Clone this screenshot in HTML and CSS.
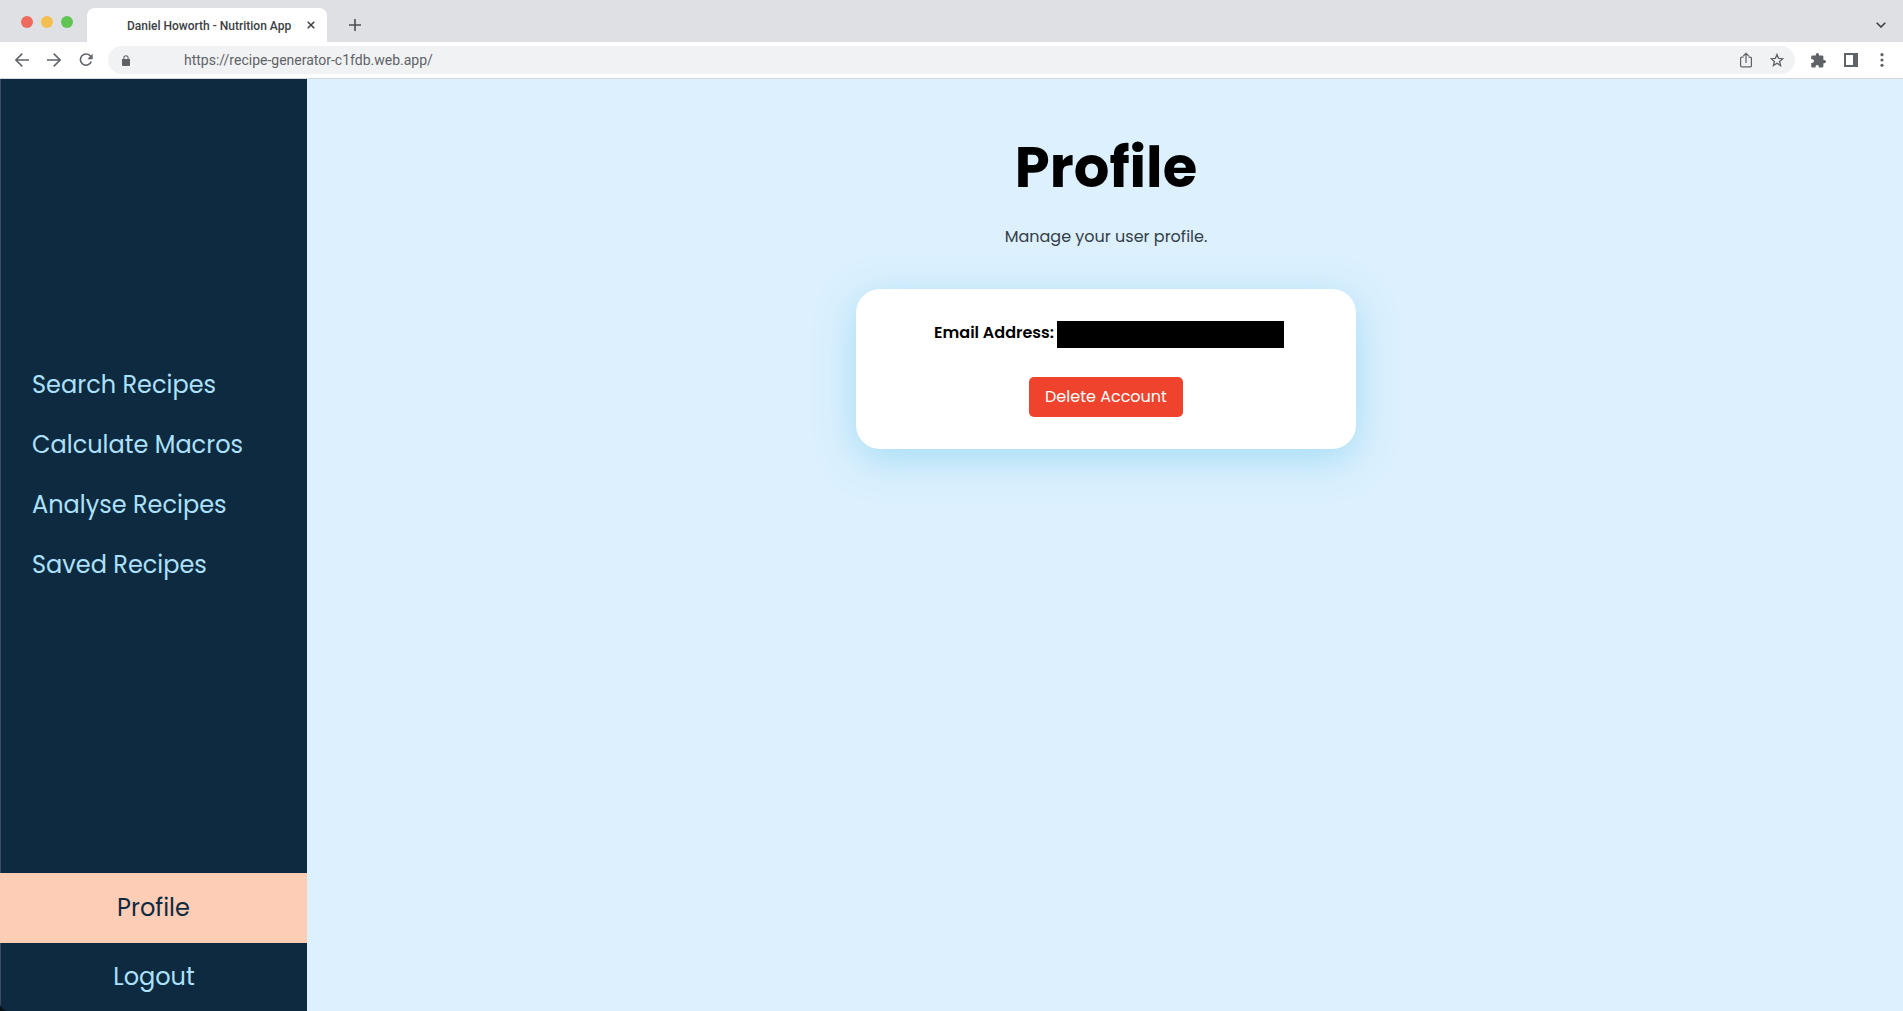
FILE: index.html
```html
<!DOCTYPE html>
<html lang="en">
<head>
<meta charset="utf-8">
<meta name="viewport" content="width=device-width, initial-scale=1">
<title>Daniel Howorth - Nutrition App</title>
<link rel="stylesheet" href="styles.css">
</head>
<body>
<div class="window">
  <header class="chrome">
    <div class="tab-strip">
      <div class="lights">
        <span class="light light-close"></span>
        <span class="light light-minimise"></span>
        <span class="light light-zoom"></span>
      </div>
      <div class="tab">
        <span class="tab-title">Daniel Howorth - Nutrition App</span>
        <button class="icon-button tab-close" aria-label="Close tab">
          <svg width="8" height="8" viewBox="0 0 8 8"><path d="M.7.7l6.6 6.6M7.3.7L.7 7.3" fill="none" stroke="#3c4043" stroke-width="1.5"/></svg>
        </button>
      </div>
      <button class="icon-button new-tab" aria-label="New tab">
        <svg width="12" height="12" viewBox="0 0 12 12"><path d="M6 0v12M0 6h12" fill="none" stroke="#4a4d51" stroke-width="1.6"/></svg>
      </button>
      <button class="icon-button tab-search" aria-label="Search tabs">
        <svg width="10" height="6" viewBox="0 0 10 6"><path d="M.7.7L5 5 9.3.7" fill="none" stroke="#3c4043" stroke-width="1.6"/></svg>
      </button>
    </div>
    <div class="toolbar">
      <button class="icon-button" aria-label="Back">
        <svg width="14" height="14" viewBox="0 0 14 14"><path d="M14 7H1M7.300.6L.9 7l6.400 6.400" fill="none" stroke="#5f6368" stroke-width="1.500"/></svg>
      </button>
      <button class="icon-button" aria-label="Forward">
        <svg width="14" height="14" viewBox="0 0 14 14"><path d="M0 7h13M6.700.6L13.100 7l-6.400 6.400" fill="none" stroke="#5f6368" stroke-width="1.500"/></svg>
      </button>
      <button class="icon-button" aria-label="Reload">
        <svg width="14" height="14" viewBox="0 0 14 14"><path d="M11.600 3.300A5.600 5.600 0 1 0 12.300 8.500" fill="none" stroke="#5f6368" stroke-width="1.600"/><path d="M13.700.8v5.400H8.300z" fill="#5f6368"/></svg>
      </button>
      <div class="omnibox">
        <svg width="8" height="11" viewBox="0 0 8 11"><path d="M0 4h8v6a1 1 0 0 1-1 1H1a1 1 0 0 1-1-1z" fill="#5f6368"/><path d="M1.900 4.500V2.800a2.100 2.100 0 0 1 4.200 0v1.700" fill="none" stroke="#5f6368" stroke-width="1.100"/></svg>
        <input class="address" type="text" aria-label="Address" value="https://recipe-generator-c1fdb.web.app/">
        <button class="icon-button share" aria-label="Share">
          <svg width="12" height="16" viewBox="0 0 12 16"><path d="M3.500 5.100H1.800a1.200 1.200 0 0 0-1.200 1.200v7.400a1.200 1.200 0 0 0 1.200 1.200h8.400a1.200 1.200 0 0 0 1.200-1.200V6.300a1.200 1.200 0 0 0-1.200-1.200H8.500M6 11V1.500M3.300 4L6 1.300 8.700 4" fill="none" stroke="#5f6368" stroke-width="1.200"/></svg>
        </button>
        <button class="icon-button" aria-label="Bookmark this page">
          <svg width="14" height="14" viewBox="0 0 14 14"><path d="M7 1.500l1.600 3.800 4.200.4-3.200 2.700 1 4.100L7 10.300l-3.600 2.200 1-4.100-3.200-2.700 4.200-.4z" fill="none" stroke="#5f6368" stroke-width="1.300"/></svg>
        </button>
      </div>
      <button class="icon-button extensions" aria-label="Extensions">
        <svg width="15" height="15" viewBox="0 0 15 15"><path d="M13.400 7H12.400V3.700a1.300 1.300 0 0 0-1.300-1.300H8V1.600a1.600 1.600 0 0 0-3.200 0v.8H1.500A1.300 1.300 0 0 0 .2 3.700v2.600h1a1.800 1.800 0 0 1 0 3.600h-1v3.400a1.300 1.300 0 0 0 1.300 1.300h3v-.8a1.700 1.700 0 0 1 3.400 0v.8h3.200a1.300 1.300 0 0 0 1.300-1.300v-3.100h1a1.600 1.600 0 0 0 0-3.200z" fill="#5f6368"/></svg>
      </button>
      <button class="icon-button" aria-label="Side panel">
        <svg width="14" height="14" viewBox="0 0 14 14"><path d="M0 0h14v14H0zM2 2v10h7V2z" fill="#5f6368" fill-rule="evenodd"/></svg>
      </button>
      <button class="icon-button menu" aria-label="Menu">
        <svg width="4" height="14" viewBox="0 0 4 14" fill="#5f6368"><circle cx="2" cy="1.700" r="1.600"/><circle cx="2" cy="7" r="1.600"/><circle cx="2" cy="12.300" r="1.600"/></svg>
      </button>
    </div>
  </header>
  <div class="app">
    <aside class="sidebar">
      <nav class="nav">
        <a class="nav-link" href="#search">Search Recipes</a>
        <a class="nav-link" href="#macros">Calculate Macros</a>
        <a class="nav-link" href="#analyse">Analyse Recipes</a>
        <a class="nav-link" href="#saved">Saved Recipes</a>
      </nav>
      <a class="account-link account-link-active" href="#profile">Profile</a>
      <a class="account-link" href="#logout">Logout</a>
    </aside>
    <main class="content">
      <h1 class="title">Profile</h1>
      <p class="intro">Manage your user profile.</p>
      <section class="card">
        <p class="email"><strong>Email Address:</strong><span class="redacted"></span></p>
        <button class="delete">Delete Account</button>
      </section>
    </main>
  </div>
</div>
</body>
</html>
```
FILE: styles.css
```css
* {
  box-sizing: border-box;
}

body {
  margin: 0;
  background: #0b0f14;
  font-family: Poppins, Inter, sans-serif;
  font-size: 16px;
  line-height: 24px;
}

.window {
  display: flex;
  flex-direction: column;
  min-height: 100vh;
  overflow: hidden;
  border-bottom-left-radius: 8px;
}

.icon-button {
  display: flex;
  flex: none;
  padding: 0;
  border: 0;
  background: none;
}

/* Browser frame */
.tab-strip {
  display: flex;
  height: 42px;
  padding: 8px 17px 0 21px;
  background: #dee0e4;
}

.lights {
  display: flex;
  gap: 8px;
  padding-top: 8px;
}

.light {
  width: 12px;
  height: 12px;
  border-radius: 50%;
}

.light-close {
  background: #ed6a5e;
}

.light-minimise {
  background: #f5bf4f;
}

.light-zoom {
  background: #61c554;
}

.tab {
  display: flex;
  align-items: center;
  justify-content: space-between;
  width: 240px;
  margin-left: 14px;
  padding: 0 12px 0 40px;
  border-radius: 8px 8px 0 0;
  background: #fff;
}

.tab-title {
  padding-top: 2px;
  color: #3c4043;
  font: 500 12px/16px Roboto, sans-serif;
  white-space: nowrap;
}

.new-tab {
  align-self: center;
  margin-left: 22px;
}

.tab-search {
  align-self: center;
  margin-left: auto;
}

.toolbar {
  display: flex;
  align-items: center;
  gap: 18px;
  height: 37px;
  padding: 0 19px 0 15px;
  border-bottom: 1px solid #d5d7da;
  background: #fff;
}

.omnibox {
  display: flex;
  flex: 1;
  align-items: center;
  gap: 18px;
  height: 28px;
  margin-left: -3px;
  padding: 0 11px 0 14px;
  border-radius: 14px;
  background: #f1f2f4;
}

.extensions {
  margin-left: -2px;
}

.menu {
  margin-left: 4px;
}

.address {
  flex: 1;
  min-width: 0;
  padding: 0 0 0 36px;
  border: 0;
  outline: 0;
  background: none;
  color: #5f6368;
  font: 14px/20px Roboto, sans-serif;
}

/* App */
.app {
  display: flex;
  flex: 1;
}

.sidebar {
  display: flex;
  flex: none;
  flex-direction: column;
  width: 307px;
  border-left: 1px solid #3a5062;
  background: #0d2a40;
  font-size: 24px;
}

.nav {
  display: flex;
  flex: 1;
  flex-direction: column;
  justify-content: center;
  padding-bottom: 2px;
}

.nav-link,
.account-link {
  color: #ade1fb;
  text-decoration: none;
}

.nav-link {
  padding: 0 31px;
  line-height: 60px;
}

.account-link {
  line-height: 68px;
  text-align: center;
}

.account-link-active {
  margin-left: -1px;
  background: #fdcdb5;
  color: #0d2a40;
  line-height: 70px;
}

.content {
  display: flex;
  flex: 1;
  flex-direction: column;
  align-items: center;
  padding: 48px 32px 48px 34px;
  background: #dcf0fe;
}

.title {
  margin: 0;
  font-size: 56px;
  font-weight: 700;
  line-height: 82px;
}

.intro {
  margin: 16px 0 40px;
  color: #333e48;
}

.card {
  display: flex;
  flex-direction: column;
  align-items: center;
  gap: 32px;
  width: 100%;
  max-width: 500px;
  padding: 32px;
  border-radius: 24px;
  background: #fff;
  box-shadow: 0 10px 40px #a3dcf4;
}

.email {
  display: flex;
  gap: 3px;
  height: 24px;
  margin: 0;
  padding-left: 6px;
}

.email strong {
  font-weight: 600;
  line-height: 24px;
}

.redacted {
  width: 227px;
  height: 27px;
  background: #000;
}

.delete {
  height: 40px;
  padding: 0 16px;
  border: 0;
  border-radius: 5px;
  background: #f0432e;
  color: #fff;
  font: inherit;
}
```
